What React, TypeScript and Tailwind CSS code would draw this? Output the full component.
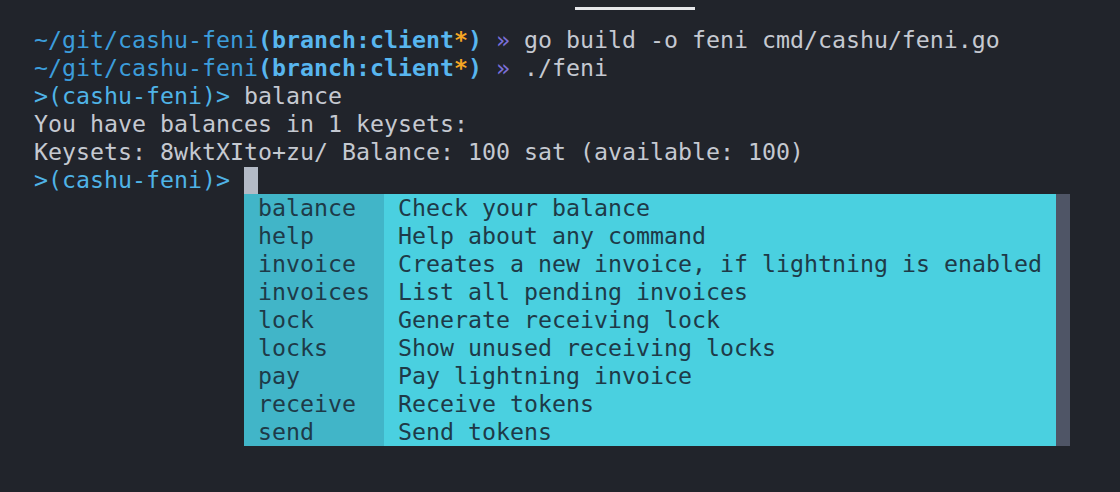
import React from "react";

const items: [string, string][] = [
  ["balance", "Check your balance"],
  ["help", "Help about any command"],
  ["invoice", "Creates a new invoice, if lightning is enabled"],
  ["invoices", "List all pending invoices"],
  ["lock", "Generate receiving lock"],
  ["locks", "Show unused receiving locks"],
  ["pay", "Pay lightning invoice"],
  ["receive", "Receive tokens"],
  ["send", "Send tokens"],
];

function GitPrompt({ cmd }: { cmd: string }) {
  return (
    <div className="h-[28px] leading-[28px] whitespace-pre">
      <span className="text-[#3c9ddb]">~/git/cashu-feni</span>
      <span className="font-bold text-[#58b6ef]">(branch:client</span>
      <span className="font-bold text-[#f5a623]">*</span>
      <span className="font-bold text-[#58b6ef]">)</span>
      <span> </span>
      <span className="text-[#7b6fd8]">»</span>
      <span className="text-[#c5c9d1]"> {cmd}</span>
    </div>
  );
}

export default function App() {
  return (
    <div
      className="w-[1120px] h-[492px] bg-[#21242b] overflow-hidden flex flex-col text-[23.25px]"
      style={{ fontFamily: '"DejaVu Sans Mono", "Liberation Mono", monospace' }}
    >
      <div className="ml-[575px] mt-[7px] w-[120px] h-[3px] bg-[#e6e7ea]" />
      <div className="mt-[16px] ml-[34px] flex flex-col">
        <GitPrompt cmd="go build -o feni cmd/cashu/feni.go" />
        <GitPrompt cmd="./feni" />
        <div className="h-[28px] leading-[28px] whitespace-pre">
          <span className="text-[#4fb3e6]">&gt;(cashu-feni)&gt; </span>
          <span className="text-[#c5c9d1]">balance</span>
        </div>
        <div className="h-[28px] leading-[28px] whitespace-pre text-[#c5c9d1]">
          You have balances in 1 keysets:
        </div>
        <div className="h-[28px] leading-[28px] whitespace-pre text-[#c5c9d1]">
          Keysets: 8wktXIto+zu/ Balance: 100 sat (available: 100)
        </div>
        <div className="h-[28px] leading-[28px] whitespace-pre flex items-center">
          <span className="text-[#4fb3e6]">&gt;(cashu-feni)&gt; </span>
          <span className="w-[14px] h-[27px] bg-[#b3bac6]" />
        </div>
        <div className="ml-[210px] flex">
          <div className="w-[140px] bg-[#41b5c8] flex flex-col">
            {items.map(([c]) => (
              <div key={c} className="h-[28px] leading-[28px] pl-[14px] whitespace-pre text-[#1e3a48]">
                {c}
              </div>
            ))}
          </div>
          <div className="w-[672px] bg-[#4ad0e0] flex flex-col">
            {items.map(([c, d]) => (
              <div key={c} className="h-[28px] leading-[28px] pl-[14px] whitespace-pre text-[#1e3a48]">
                {d}
              </div>
            ))}
          </div>
          <div className="w-[14px] bg-[#4f5566]" />
        </div>
      </div>
    </div>
  );
}
